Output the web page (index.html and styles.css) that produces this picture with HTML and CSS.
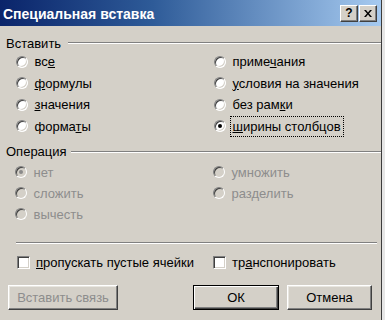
FILE: index.html
```html
<!DOCTYPE html>
<html lang="ru">
<head>
<meta charset="utf-8">
<title>Специальная вставка</title>
<link rel="stylesheet" href="styles.css">
</head>
<body>
<div class="dialog">
  <div class="titlebar">
    <span class="title">Специальная вставка</span>
    <div class="tb-buttons">
      <span class="tb-btn help">?</span>
      <span class="tb-btn close"><svg width="8" height="7" viewBox="0 0 8 7"><path d="M0 0h2l2 2.4L6 0h2L5 3.5 8 7H6L4 4.6 2 7H0l3-3.5z" fill="#000"/></svg></span>
    </div>
  </div>
  <div class="content">
    <div class="group-head"><span>Вставить</span><span class="etch"></span></div>
    <div class="options">
      <div class="opt"><span class="radio"></span><span>вс<u>е</u></span></div>
      <div class="opt"><span class="radio"></span><span>приме<u>ч</u>ания</span></div>
      <div class="opt"><span class="radio"></span><span><u>ф</u>ормулы</span></div>
      <div class="opt"><span class="radio"></span><span><u>у</u>словия на значения</span></div>
      <div class="opt"><span class="radio"></span><span><u>з</u>начения</span></div>
      <div class="opt"><span class="radio"></span><span>без рам<u>к</u>и</span></div>
      <div class="opt"><span class="radio"></span><span>форма<u>т</u>ы</span></div>
      <div class="opt"><span class="radio checked"></span><span class="focus"><u>ш</u>ирины столбцов</span></div>
    </div>

    <div class="group-head op-head"><span>Операция</span><span class="etch"></span></div>
    <div class="options ops">
      <div class="opt disabled"><span class="radio checked"></span><span>нет</span></div>
      <div class="opt disabled"><span class="radio"></span><span>умножить</span></div>
      <div class="opt disabled"><span class="radio"></span><span>сложить</span></div>
      <div class="opt disabled"><span class="radio"></span><span>разделить</span></div>
      <div class="opt disabled"><span class="radio"></span><span>вычесть</span></div>
    </div>

    <div class="separator"></div>

    <div class="checks">
      <div class="chk"><span class="box"></span><span><u>п</u>ропускать пустые ячейки</span></div>
      <div class="chk"><span class="box"></span><span>тр<u>а</u>нспонировать</span></div>
    </div>

    <div class="buttons">
      <span class="btn link disabled">Вставить связь</span>
      <span class="btn ok default">ОК</span>
      <span class="btn cancel">Отмена</span>
    </div>
  </div>
</div>
</body>
</html>
```
FILE: styles.css
```css
html, body {
  margin: 0;
  padding: 0;
}
body {
  width: 385px;
  height: 320px;
  overflow: hidden;
  background: #e6e6e6;
  font-family: "Liberation Sans", Arial, sans-serif;
  font-size: 13px;
  color: #000;
}
.dialog {
  width: 381px;
  height: 320px;
  background: #d4d0c8;
  border-right: 1px solid #3c3c3c;
}
.titlebar {
  height: 26px;
  display: flex;
  align-items: center;
  padding: 0 4px 0 3px;
  background: linear-gradient(to right, #0a246a 0%, #2e5b98 40%, #a6caf0 100%);
}
.title {
  color: #fff;
  font-weight: bold;
  font-size: 14px;
  margin-top: 1px;
}
.tb-buttons {
  margin-left: auto;
  display: flex;
  gap: 1px;
}
.tb-btn {
  width: 18px;
  height: 17px;
  box-sizing: border-box;
  background: #d4d0c8;
  border: 1px solid;
  border-color: #fff #404040 #404040 #fff;
  box-shadow: inset -1px -1px 0 #808080;
  display: flex;
  align-items: center;
  justify-content: center;
}
.help {
  font-weight: bold;
  font-size: 12px;
  line-height: 1;
}
.content {
  padding-top: 9px;
}
.group-head {
  height: 16px;
  display: flex;
  align-items: center;
  padding-left: 6px;
}
.etch {
  flex: 1;
  height: 0;
  border-top: 1px solid #808080;
  border-bottom: 1px solid #fff;
  margin-left: 7px;
}
.op-head {
  margin-top: 6.5px;
}
.op-head .etch {
  margin-left: 4px;
}
.options {
  display: grid;
  grid-template-columns: 198px 1fr;
  grid-auto-rows: 21.5px;
  align-items: center;
  padding-left: 16px;
}
.ops {
  grid-auto-rows: 21px;
  margin-top: 2px;
  padding-left: 15px;
}
.opt {
  display: flex;
  align-items: center;
  gap: 6.5px;
}
.radio {
  position: relative;
  width: 12px;
  height: 12px;
  box-sizing: border-box;
  border-radius: 50%;
  background: #fff;
  border: 1px solid;
  border-color: #808080 #fff #fff #808080;
  box-shadow: inset 1px 1px 0 #404040, inset -1px -1px 0 #d4d0c8;
  flex: none;
}
.radio.checked::after {
  content: "";
  position: absolute;
  left: 3px;
  top: 3px;
  width: 4px;
  height: 4px;
  border-radius: 50%;
  background: #000;
}
.disabled {
  color: #8d8d8d;
}
.disabled .radio {
  background: #d4d0c8;
}
.disabled .radio.checked::after {
  background: #8a8a8a;
}
.focus {
  outline: 1px dotted #000;
  outline-offset: 2px;
}
u {
  text-decoration: underline;
  text-underline-offset: 1px;
}
.separator {
  margin: 17px 4px 0 16px;
  border-top: 1px solid #808080;
  border-bottom: 1px solid #fff;
}
.checks {
  margin-top: 10px;
  display: grid;
  grid-template-columns: 196px 1fr;
  grid-auto-rows: 18px;
  align-items: center;
  padding-left: 17px;
}
.chk {
  display: flex;
  align-items: center;
  gap: 6px;
}
.box {
  width: 13px;
  height: 13px;
  box-sizing: border-box;
  background: #fff;
  border: 1px solid;
  border-color: #808080 #fff #fff #808080;
  box-shadow: inset 1px 1px 0 #404040, inset -1px -1px 0 #d4d0c8;
  flex: none;
}
.buttons {
  margin-top: 13px;
  display: flex;
  padding-left: 8px;
}
.btn {
  height: 25px;
  box-sizing: border-box;
  display: flex;
  align-items: center;
  justify-content: center;
  background: #d4d0c8;
  border: 1px solid;
  border-color: #fff #404040 #404040 #fff;
  box-shadow: inset -1px -1px 0 #808080, inset 1px 1px 0 #e8e6e0;
}
.btn.default {
  border: 1px solid #000;
  box-shadow: inset 1px 1px 0 #fff, inset -1px -1px 0 #404040, inset -2px -2px 0 #808080;
}
.link {
  width: 110px;
}
.ok {
  width: 86px;
  margin-left: 75px;
}
.cancel {
  width: 85px;
  margin-left: 8px;
}
```
